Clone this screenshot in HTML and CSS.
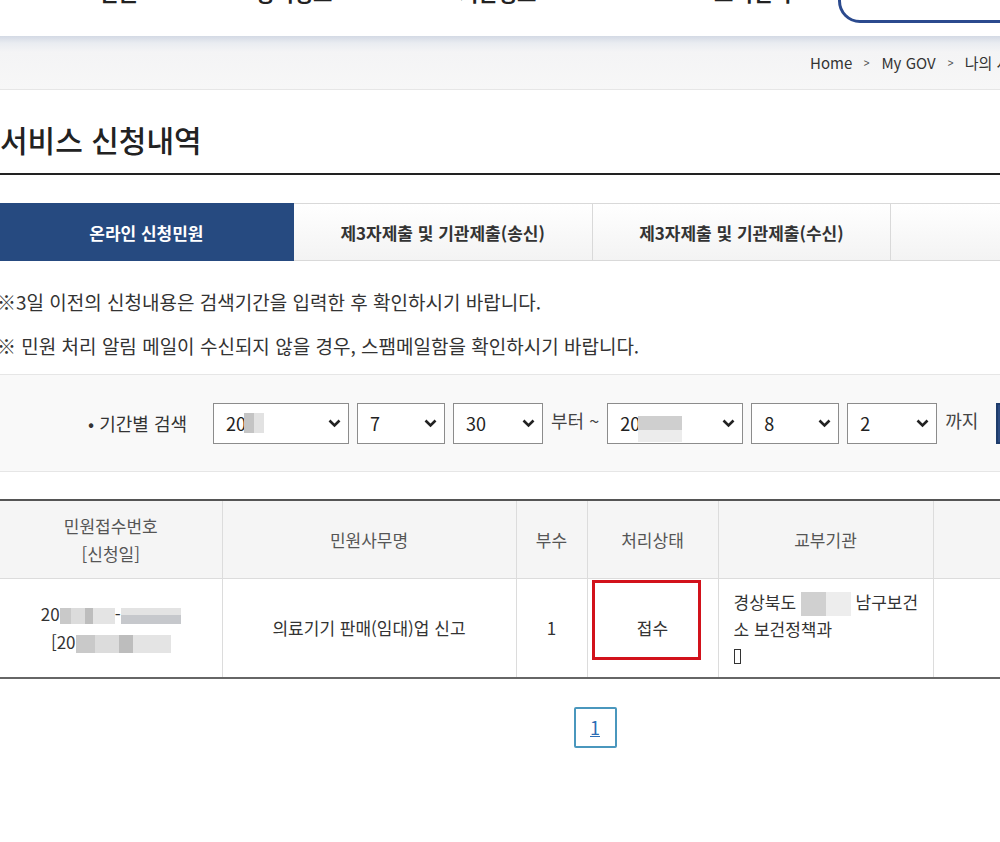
FILE: index.html
```html
<!DOCTYPE html>
<html lang="ko">
<head>
  <meta charset="UTF-8">
  <meta name="viewport" content="width=device-width, initial-scale=1.0">
  <title>서비스 신청내역</title>
  <link rel="stylesheet" href="styles.css">
</head>
<body>
  <header class="header">
    <nav class="gnb">
      <span>민원</span>
      <span>정책정보</span>
      <span>기관정보</span>
      <span>고객센터</span>
      <a class="login" href="#">로그인</a>
    </nav>
  </header>

  <div class="location">
    <span>Home</span>
    <span class="arr">&gt;</span>
    <span>My GOV</span>
    <span class="arr">&gt;</span>
    <span>나의 서비스</span>
  </div>

  <div class="content">
    <h2 class="tit">서비스 신청내역</h2>

    <ul class="tabs">
      <li class="on">온라인 신청민원</li>
      <li>제3자제출 및 기관제출(송신)</li>
      <li>제3자제출 및 기관제출(수신)</li>
      <li>처리결과</li>
    </ul>

    <ul class="notice">
      <li>※3일 이전의 신청내용은 검색기간을 입력한 후 확인하시기 바랍니다.</li>
      <li>※ 민원 처리 알림 메일이 수신되지 않을 경우, 스팸메일함을 확인하시기 바랍니다.</li>
    </ul>

    <div class="search">
      <span class="label">• 기간별 검색</span>
      <div class="sel w-year"><span>20</span><span class="blur b1"></span>
        <svg class="chev" width="13" height="9" viewBox="0 0 13 9"><path d="M1.5 1.5 L6.5 6.5 L11.5 1.5" fill="none" stroke="#222" stroke-width="2.6"/></svg></div>
      <div class="sel w-mon"><span>7</span>
        <svg class="chev" width="13" height="9" viewBox="0 0 13 9"><path d="M1.5 1.5 L6.5 6.5 L11.5 1.5" fill="none" stroke="#222" stroke-width="2.6"/></svg></div>
      <div class="sel w-day"><span>30</span>
        <svg class="chev" width="13" height="9" viewBox="0 0 13 9"><path d="M1.5 1.5 L6.5 6.5 L11.5 1.5" fill="none" stroke="#222" stroke-width="2.6"/></svg></div>
      <span class="txt">부터 ~</span>
      <div class="sel w-year"><span>20</span><span class="blur b2"></span>
        <svg class="chev" width="13" height="9" viewBox="0 0 13 9"><path d="M1.5 1.5 L6.5 6.5 L11.5 1.5" fill="none" stroke="#222" stroke-width="2.6"/></svg></div>
      <div class="sel w-mon"><span>8</span>
        <svg class="chev" width="13" height="9" viewBox="0 0 13 9"><path d="M1.5 1.5 L6.5 6.5 L11.5 1.5" fill="none" stroke="#222" stroke-width="2.6"/></svg></div>
      <div class="sel w-day"><span>2</span>
        <svg class="chev" width="13" height="9" viewBox="0 0 13 9"><path d="M1.5 1.5 L6.5 6.5 L11.5 1.5" fill="none" stroke="#222" stroke-width="2.6"/></svg></div>
      <span class="txt">까지</span>
      <button class="btn-search">검색</button>
    </div>

    <table class="list">
      <colgroup>
        <col style="width:222px">
        <col style="width:294px">
        <col style="width:71px">
        <col style="width:131px">
        <col style="width:215px">
        <col>
      </colgroup>
      <thead>
        <tr>
          <th>민원접수번호<br>[신청일]</th>
          <th>민원사무명</th>
          <th>부수</th>
          <th>처리상태</th>
          <th>교부기관</th>
          <th>연계</th>
        </tr>
      </thead>
      <tbody>
        <tr>
          <td>20<span class="blur c1"></span>-<span class="blur c2"></span><br>[20<span class="blur c3"></span></td>
          <td>의료기기 판매(임대)업 신고</td>
          <td>1</td>
          <td class="state"><span class="mark"></span>접수</td>
          <td class="left">경상북도 <span class="blur c4"></span> 남구보건소 보건정책과<br><span class="tofu"></span></td>
          <td></td>
        </tr>
      </tbody>
    </table>

    <div class="paging">
      <a href="#" class="page">1</a>
    </div>
  </div>
</body>
</html>
```

FILE: styles.css
```css
html, body {
  overflow: hidden;
}

body {
  margin: 0;
  width: 1000px;
  font-family: "Noto Sans CJK KR", "Noto Sans", sans-serif;
  color: #333;
  background: #fff;
}

ul {
  list-style: none;
  margin: 0;
  padding: 0;
}

/* header */
.header {
  height: 36px;
  overflow: hidden;
  background: #fff;
}

.gnb {
  display: grid;
  grid-template-columns: 156px 204px 255px 124px 220px;
  padding-left: 99px;
  margin-top: -20px;
  font-size: 21px;
  font-weight: bold;
  line-height: 24px;
  color: #222;
}

.login {
  display: block;
  height: 44px;
  margin-top: -7px;
  border: 3px solid #2b4a8e;
  border-radius: 22px;
  color: #2b4a8e;
  text-decoration: none;
}

/* breadcrumb */
.location {
  display: flex;
  align-items: center;
  gap: 9px;
  height: 53px;
  padding-left: 810px;
  border-bottom: 1px solid #e6e6e6;
  background: linear-gradient(#d3d9e4 0, #e9ecf1 7px, #f4f4f5 16px, #f7f7f7 100%);
  font-size: 15px;
  color: #333;
  white-space: nowrap;
}

.location .arr {
  font-size: 13px;
  color: #555;
  margin: 0 2px;
  transform: scaleX(0.8);
}

/* content */
.content {
  width: 1190px;
}

.tit {
  margin: 0;
  padding: 29px 0 13px;
  border-bottom: 2px solid #222;
  font-size: 30px;
  font-weight: 500;
  line-height: 41px;
  color: #222;
}

.tabs {
  display: flex;
  margin-top: 28px;
  height: 58px;
}

.tabs li {
  display: flex;
  align-items: center;
  justify-content: center;
  width: 300px;
  border: 1px solid #d9d9d9;
  border-left: none;
  background: linear-gradient(#fff, #f3f3f3);
  font-size: 17px;
  font-weight: bold;
  color: #333;
}

.tabs li.on {
  width: 295px;
  border-color: #264a80;
  background: #264a80;
  color: #fff;
}

.notice {
  margin: 19px 0 0 -3px;
  font-size: 19px;
  line-height: 44px;
  color: #333;
}

/* search */
.search {
  display: flex;
  align-items: center;
  gap: 8px;
  height: 96px;
  margin-top: 6px;
  padding-left: 88px;
  border-top: 1px solid #e6e6e6;
  border-bottom: 1px solid #e6e6e6;
  background: #f9f9f9;
}

.search .label {
  margin-right: 18px;
  font-size: 18px;
  color: #333;
}

.search .txt {
  font-size: 18px;
  color: #444;
  margin-top: -6px;
}

.sel {
  position: relative;
  display: flex;
  align-items: center;
  padding-left: 12px;
  box-sizing: border-box;
  height: 41px;
  border: 1px solid #8c8c8c;
  background: #fff;
  font-size: 18px;
  color: #222;
}

.sel .chev {
  position: absolute;
  right: 7px;
  top: 15px;
}

.w-year { width: 136px; }
.w-mon { width: 88px; }
.w-day { width: 90px; }

.btn-search {
  width: 60px;
  height: 41px;
  margin-left: 10px;
  border: 2px solid #1e3c6b;
  background: #2b4a80;
  color: #fff;
  font-family: inherit;
  font-size: 16px;
}

/* blurred personal data */
.blur {
  display: inline-block;
  vertical-align: middle;
  height: 16px;
  background: linear-gradient(90deg, #c9c9c9 0 20%, #dcdcdc 20% 45%, #bdbdbd 45% 60%, #e4e4e4 60% 100%);
}

.b1 {
  width: 20px;
  height: 20px;
  margin-left: -2px;
  background: linear-gradient(90deg, #c4c4c4 0 50%, #e2e2e2 50% 100%);
}

.b2 {
  width: 44px;
  height: 26px;
  margin-left: -2px;
  margin-top: 12px;
  background: linear-gradient(#cfcfcf 0 55%, #ececec 55% 100%);
}

.c1 { width: 55px; }
.c2 { width: 60px; background: linear-gradient(#e3e3e3 0 45%, #c6c8cc 45% 100%); }
.c3 { width: 95px; height: 18px; }
.c4 { width: 50px; height: 24px; background: linear-gradient(90deg, #d0d0d0 0 50%, #ededed 50% 100%); }

/* table */
.list {
  width: 1190px;
  table-layout: fixed;
  border-collapse: collapse;
  margin-top: 27px;
  border-top: 2px solid #555;
  border-bottom: 2px solid #666;
  font-size: 17px;
}

.list th {
  height: 77px;
  padding: 0;
  border-left: 1px solid #dcdcdc;
  border-bottom: 1px solid #dcdcdc;
  background: #f5f5f5;
  font-weight: normal;
  line-height: 28px;
  color: #555;
}

.list td {
  height: 96px;
  padding: 0;
  border-left: 1px solid #dcdcdc;
  text-align: center;
  line-height: 28px;
  color: #333;
}

.list th:first-child,
.list td:first-child {
  border-left: none;
}

.list td.left {
  text-align: left;
  padding: 2px 10px 0 15px;
  line-height: 26.5px;
  word-break: break-all;
}

.list td.state {
  position: relative;
}

.mark {
  position: absolute;
  left: 4px;
  top: 1px;
  width: 103px;
  height: 74px;
  border: 3px solid #d2121b;
}

.tofu {
  display: inline-block;
  width: 5px;
  height: 13px;
  border: 1px solid #333;
  vertical-align: -1px;
}

/* paging */
.paging {
  margin-top: 28px;
  text-align: center;
}

.page {
  display: inline-block;
  width: 39px;
  height: 37px;
  border: 2px solid #4a97bd;
  border-radius: 2px;
  font-size: 18px;
  line-height: 37px;
  color: #2c6db5;
  text-decoration: underline;
}
```
